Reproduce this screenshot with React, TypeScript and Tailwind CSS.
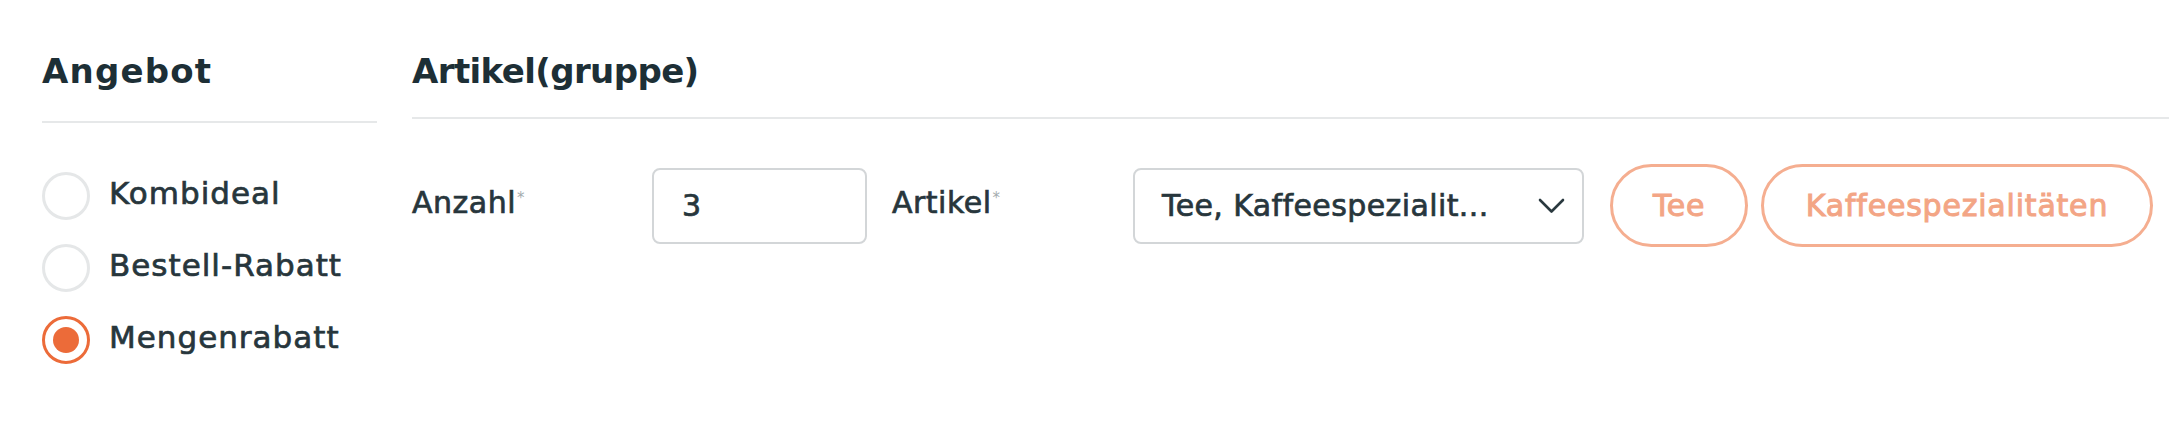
import React from "react";

const font = { fontFamily: '"DejaVu Sans", "Liberation Sans", sans-serif' };

function Radio({ label, checked }: { label: string; checked?: boolean }) {
  return (
    <div className="flex h-[72px] items-center">
      {checked ? (
        <div className="flex h-[48px] w-[48px] items-center justify-center rounded-full border-[3px] border-[#ec6b39]">
          <div className="h-[26px] w-[26px] rounded-full bg-[#ec6b39]" />
        </div>
      ) : (
        <div className="h-[48px] w-[48px] rounded-full border-[3px] border-[#e5e7e8]" />
      )}
      <span className="ml-[19px] mb-[5px] text-[31px] leading-[31px] tracking-[1px] text-[#27363c] [-webkit-text-stroke:0.7px]">{label}</span>
    </div>
  );
}

function Label({ text, w }: { text: string; w: string }) {
  return (
    <div className={`${w} flex items-start mb-[5px]`}>
      <span className="text-[30px] leading-[30px] tracking-[0.5px] text-[#27363c] [-webkit-text-stroke:0.7px]">{text}</span>
      <span className="ml-[1px] mt-[3px] text-[15px] leading-[15px] text-[#a3abae]">*</span>
    </div>
  );
}

export default function App() {
  return (
    <div className="flex h-[428px] w-[2176px] bg-white pl-[42px]" style={font}>
      <div className="w-[335px] shrink-0">
        <div className="border-b-2 border-[#e6e8e9] pt-[54px] pb-[33px]">
          <h2 className="text-[34px] font-bold leading-[34px] tracking-[1.2px] text-[#1d2f36]">Angebot</h2>
        </div>
        <div className="pt-[37px]">
          <Radio label="Kombideal" />
          <Radio label="Bestell-Rabatt" />
          <Radio label="Mengenrabatt" checked />
        </div>
      </div>
      <div className="ml-[35px] w-[1757px] shrink-0">
        <div className="border-b-2 border-[#e6e8e9] pt-[54px] pb-[29px]">
          <h2 className="text-[34px] font-bold leading-[34px] tracking-[-0.6px] text-[#1d2f36]">Artikel(gruppe)</h2>
        </div>
        <div className="mt-[45px] flex h-[83px] items-center">
          <Label text="Anzahl" w="w-[240px]" />
          <div className="flex h-[76px] w-[215px] items-center rounded-[8px] border-2 border-[#d3d6d8] pl-[28px] text-[30px] leading-[30px] text-[#27363c] [-webkit-text-stroke:0.7px]">
            3
          </div>
          <div className="ml-[25px] flex">
            <Label text="Artikel" w="w-[241px]" />
          </div>
          <div className="flex h-[76px] w-[451px] items-center justify-between rounded-[8px] border-2 border-[#d3d6d8] pl-[27px] pr-[17px]">
            <span className="text-[30px] leading-[30px] tracking-[0.4px] text-[#27363c] [-webkit-text-stroke:0.7px]">Tee, Kaffeespezialit...</span>
            <svg width="27" height="16" viewBox="0 0 27 16" fill="none">
              <polyline points="2,2 13.5,13.5 25,2" stroke="#2a393f" strokeWidth="2.6" strokeLinecap="round" strokeLinejoin="round" />
            </svg>
          </div>
          <div className="ml-[26px] flex h-[83px] w-[138px] items-center justify-center rounded-full border-[3px] border-[#f5ae90]">
            <span className="text-[30px] leading-[30px] tracking-[0.6px] text-[#f3a585] [-webkit-text-stroke:1px]">Tee</span>
          </div>
          <div className="ml-[13px] flex h-[83px] w-[392px] items-center justify-center rounded-full border-[3px] border-[#f5ae90]">
            <span className="text-[30px] leading-[30px] tracking-[0.8px] text-[#f3a585] [-webkit-text-stroke:1px]">Kaffeespezialitäten</span>
          </div>
        </div>
      </div>
    </div>
  );
}
